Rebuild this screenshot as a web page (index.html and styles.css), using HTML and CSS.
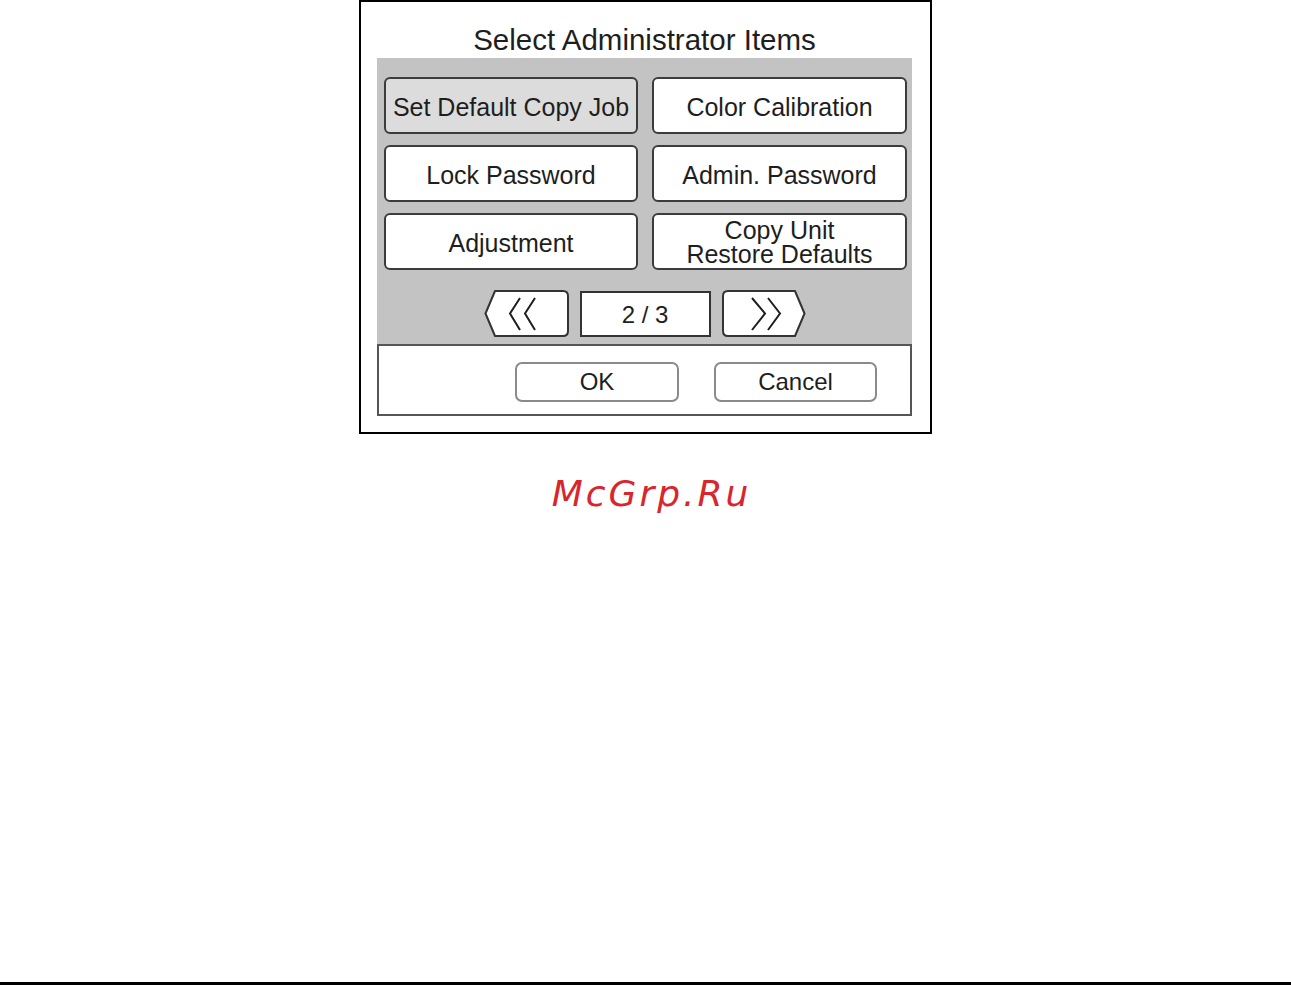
FILE: index.html
```html
<!DOCTYPE html>
<html>
<head>
<meta charset="utf-8">
<title>Select Administrator Items</title>
<link rel="stylesheet" href="styles.css">
</head>
<body>
<div class="page">
  <div class="frame">
    <div class="title">Select Administrator Items</div>
    <div class="panel">
      <div class="items">
        <div class="item selected">Set Default Copy Job</div>
        <div class="item">Color Calibration</div>
        <div class="item">Lock Password</div>
        <div class="item">Admin. Password</div>
        <div class="item">Adjustment</div>
        <div class="item two"><span class="ln">Copy Unit</span><span class="ln">Restore Defaults</span></div>
      </div>
      <div class="nav">
        <svg class="arrow prev" width="85" height="47" viewBox="0 0 85 47">
          <path d="M11 1 H79 Q84 1 84 6 V41 Q84 46 79 46 H11 L1.5 23.5 Z" fill="#fff" stroke="#333" stroke-width="2" stroke-linejoin="round"/>
          <path d="M36 8 L26 23.5 L36 40 M51 8 L41 23.5 L51 40" fill="none" stroke="#1e1e1e" stroke-width="2"/>
        </svg>
        <div class="pageno">2 / 3</div>
        <svg class="arrow next" width="84" height="47" viewBox="0 0 84 47">
          <path d="M1 6 Q1 1 6 1 H73 L82.5 23.5 L73 46 H6 Q1 46 1 41 Z" fill="#fff" stroke="#333" stroke-width="2" stroke-linejoin="round"/>
          <path d="M30 8 L43 23.5 L30 40 M46 8 L58 23.5 L46 40" fill="none" stroke="#1e1e1e" stroke-width="2"/>
        </svg>
      </div>
    </div>
    <div class="footer">
      <div class="btn ok">OK</div>
      <div class="btn cancel">Cancel</div>
    </div>
  </div>
  <div class="watermark">McGrp.Ru</div>
  <div class="spacer"></div>
  <div class="rule"></div>
</div>
</body>
</html>
```
FILE: styles.css
```css
html, body {
  margin: 0;
  padding: 0;
  background: #fff;
}
body {
  font-family: "Liberation Sans", Arial, sans-serif;
  color: #222;
}
.page {
  height: 985px;
  display: flex;
  flex-direction: column;
  overflow: hidden;
}
.frame {
  box-sizing: border-box;
  width: 573px;
  height: 434px;
  margin: 0 auto;
  border: 2px solid #000;
  flex: none;
}
.title {
  width: 535px;
  margin-left: 16px;
  box-sizing: border-box;
  height: 56px;
  padding-top: 22px;
  font-size: 29.5px;
  line-height: 32px;
  text-align: center;
  color: #1e1e1e;
  white-space: nowrap;
}
.panel {
  width: 535px;
  margin-left: 16px;
  box-sizing: border-box;
  background: #c3c3c3;
  padding: 19px 5px 7px 7px;
}
.items {
  display: grid;
  grid-template-columns: 254px 255px;
  grid-auto-rows: 57px;
  column-gap: 14px;
  row-gap: 11px;
}
.item {
  box-sizing: border-box;
  border: 2px solid #3c3c3c;
  border-radius: 6px;
  background: #fff;
  display: flex;
  align-items: center;
  justify-content: center;
  text-align: center;
  font-size: 25px;
  padding-top: 3px;
  color: #1e1e1e;
}
.item.selected {
  background: #dcdcdc;
}
.item.two {
  flex-direction: column;
  padding-top: 1px;
}
.ln {
  display: block;
  line-height: 24px;
  height: 24px;
}
.nav {
  margin-top: 20px;
  height: 47px;
  display: flex;
  justify-content: center;
  align-items: flex-start;
  gap: 11px;
  padding-right: 2px;
}
.arrow {
  display: block;
}
.pageno {
  box-sizing: border-box;
  width: 131px;
  height: 46px;
  margin-top: 1px;
  border: 2px solid #333;
  background: #fff;
  display: flex;
  align-items: center;
  justify-content: center;
  font-size: 24px;
  padding-top: 2px;
  color: #1e1e1e;
}
.footer {
  width: 535px;
  margin-left: 16px;
  box-sizing: border-box;
  height: 72px;
  border: 2px solid #555;
  display: flex;
  justify-content: flex-end;
  align-items: flex-start;
  padding: 16px 33px 0 0;
  gap: 35px;
}
.btn {
  box-sizing: border-box;
  height: 40px;
  border: 2px solid #8a8a8a;
  border-radius: 7px;
  background: #fff;
  display: flex;
  align-items: center;
  justify-content: center;
  font-size: 24px;
  color: #1e1e1e;
}
.btn.ok {
  width: 164px;
}
.btn.cancel {
  width: 163px;
}
.watermark {
  flex: none;
  margin-top: 38px;
  padding-left: 12px;
  text-align: center;
  font-family: "DejaVu Sans", Verdana, sans-serif;
  font-style: italic;
  font-size: 36px;
  line-height: 44px;
  letter-spacing: 3px;
  color: #d8262c;
}
.spacer {
  flex: 1;
}
.rule {
  flex: none;
  height: 3px;
  background: #000;
}
```
